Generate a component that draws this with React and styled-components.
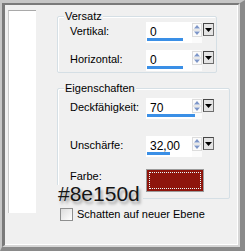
import React from "react";
import styled, { createGlobalStyle } from "styled-components";

const GlobalStyle = createGlobalStyle`
  html, body {
    margin: 0;
    padding: 0;
    background: #f0f0f0;
  }
  body {
    font-family: "Liberation Sans", Arial, sans-serif;
    font-size: 11px;
    color: #000;
  }
`;

const Frame = styled.div`
  width: 245px;
  height: 251px;
  box-sizing: border-box;
  border-style: solid;
  border-width: 3px 5px 4px 2px;
  border-color: #c6c6c6 #8a8a8a #8a8a8a #c6c6c6;
`;

const Inner = styled.div`
  height: 100%;
  box-sizing: border-box;
  border-style: solid;
  border-width: 2px 2px 2px 3px;
  border-color: #7a7a7a #d6d6d6 #d6d6d6 #7a7a7a;
  box-shadow: inset -1px -1px 0 #fff;
  background: #f0f0f0;
  display: flex;
  align-items: flex-start;
  padding: 4px 0 0 3px;
`;

const ListPanel = styled.div`
  width: 28px;
  height: 203px;
  margin-top: 1px;
  box-sizing: border-box;
  background: #fff;
  border-top: 1px solid #a9a9a9;
  border-left: 1px solid #c8c8c8;
`;

const Column = styled.div`
  position: relative;
  margin-left: 21px;
  display: flex;
  flex-direction: column;
  align-items: flex-start;
`;

const Group = styled.div`
  display: flex;
  flex-direction: column;
  align-items: flex-start;
  margin-top: ${(p) => p.$gap || 0}px;
`;

const Legend = styled.span`
  position: relative;
  z-index: 1;
  margin-left: 7px;
  padding: 0 1px;
  line-height: 14px;
  background: #f0f0f0;
`;

const GroupBox = styled.div`
  margin-top: -7px;
  width: ${(p) => p.$width}px;
  box-sizing: border-box;
  border: 1px solid #d5dfe5;
  border-radius: 2px;
  box-shadow: inset 1px 1px 0 #fff;
  padding: ${(p) => p.$pad};
  display: flex;
  flex-direction: column;
`;

const Row = styled.div`
  display: flex;
  align-items: flex-start;
  margin-top: ${(p) => p.$gap || 0}px;
`;

const Label = styled.span`
  width: 76px;
  padding-top: ${(p) => (p.$top === undefined ? 2 : p.$top)}px;
  line-height: 14px;
`;

const SpinBox = styled.div`
  position: relative;
  display: flex;
  align-items: flex-start;
  height: 21px;
`;

const Field = styled.div`
  width: 46px;
  height: 21px;
  box-sizing: border-box;
  background: #fff;
  padding: 3px 0 0 4px;
  font-size: 12px;
  line-height: 14px;
`;

const Bar = styled.div`
  position: absolute;
  left: 1px;
  bottom: 2px;
  height: 3px;
  width: ${(p) => p.$fill}px;
  background: #3a8fe6;
`;

const Spinner = styled.div`
  width: 10px;
  height: 21px;
  background: #fbfbfb;
`;

const SpinFrame = styled.div`
  height: 14px;
  margin-top: 1px;
  box-sizing: border-box;
  border: 1px solid #dcdcdc;
  display: flex;
`;

const DropButton = styled.div`
  width: 11px;
  height: 13px;
  margin: 1px 0 0 1px;
  box-sizing: border-box;
  border: 1px solid #474747;
  border-right-color: #6e6e6e;
  border-bottom-color: #6e6e6e;
  background: #e4e4e4;
  display: flex;
  align-items: center;
  justify-content: center;
  padding-top: 1px;
`;

const Swatch = styled.div`
  width: 58px;
  height: 23px;
  box-sizing: border-box;
  background: #8e150d;
  border: 1px solid #9a9a9a;
  outline: 1px dotted #e6ffff;
  outline-offset: -4px;
`;

const Hex = styled.div`
  position: absolute;
  left: 0;
  top: 176px;
  padding: 0 3px 0 1px;
  background: #f0f0f0;
  font-size: 21px;
  line-height: 18px;
  color: #151515;
  text-shadow: 2px 3px 3px rgba(0, 0, 0, 0.35);
`;

const CheckRow = styled.label`
  display: flex;
  align-items: center;
  margin: 9px 0 0 3px;
  gap: 4px;
  line-height: 13px;
`;

const CheckBox = styled.span`
  width: 13px;
  height: 13px;
  box-sizing: border-box;
  border: 1px solid #8e8f8f;
  background: linear-gradient(135deg, #dcdcdc, #ffffff);
`;

const SpinArrows = () => (
  <svg width="8" height="12" viewBox="0 0 8 12">
    <path d="M4 1 L7 4.5 L1 4.5 Z" fill="#7d96c8" />
    <line x1="0" y1="6" x2="8" y2="6" stroke="#d4d4d4" />
    <path d="M1 7.5 L7 7.5 L4 11 Z" fill="#7d96c8" />
  </svg>
);

const Spin = ({ value, fill }) => (
  <SpinBox>
    <Field>{value}</Field>
    <Spinner>
      <SpinFrame>
        <SpinArrows />
      </SpinFrame>
    </Spinner>
    <DropButton>
      <svg width="7" height="4" viewBox="0 0 7 4">
        <path d="M0 0 L7 0 L3.5 4 Z" fill="#000" />
      </svg>
    </DropButton>
    <Bar $fill={fill} />
  </SpinBox>
);

export default function App() {
  return (
    <>
      <GlobalStyle />
      <Frame>
        <Inner>
          <ListPanel />
          <Column>
            <Group>
              <Legend>Versatz</Legend>
              <GroupBox $width={160} $pad="5px 0 1px 12px">
                <Row>
                  <Label>Vertikal:</Label>
                  <Spin value="0" fill={36} />
                </Row>
                <Row $gap={7}>
                  <Label>Horizontal:</Label>
                  <Spin value="0" fill={36} />
                </Row>
              </GroupBox>
            </Group>
            <Group $gap={8}>
              <Legend>Eigenschaften</Legend>
              <GroupBox $width={173} $pad="9px 0 6px 12px">
                <Row>
                  <Label>Deckfähigkeit:</Label>
                  <Spin value="70" fill={48} />
                </Row>
                <Row $gap={17}>
                  <Label>Unschärfe:</Label>
                  <Spin value="32,00" fill={23} />
                </Row>
                <Row $gap={12}>
                  <Label $top={-1}>Farbe:</Label>
                  <Swatch />
                </Row>
              </GroupBox>
            </Group>
            <CheckRow>
              <CheckBox />
              Schatten auf neuer Ebene
            </CheckRow>
            <Hex>#8e150d</Hex>
          </Column>
        </Inner>
      </Frame>
    </>
  );
}
